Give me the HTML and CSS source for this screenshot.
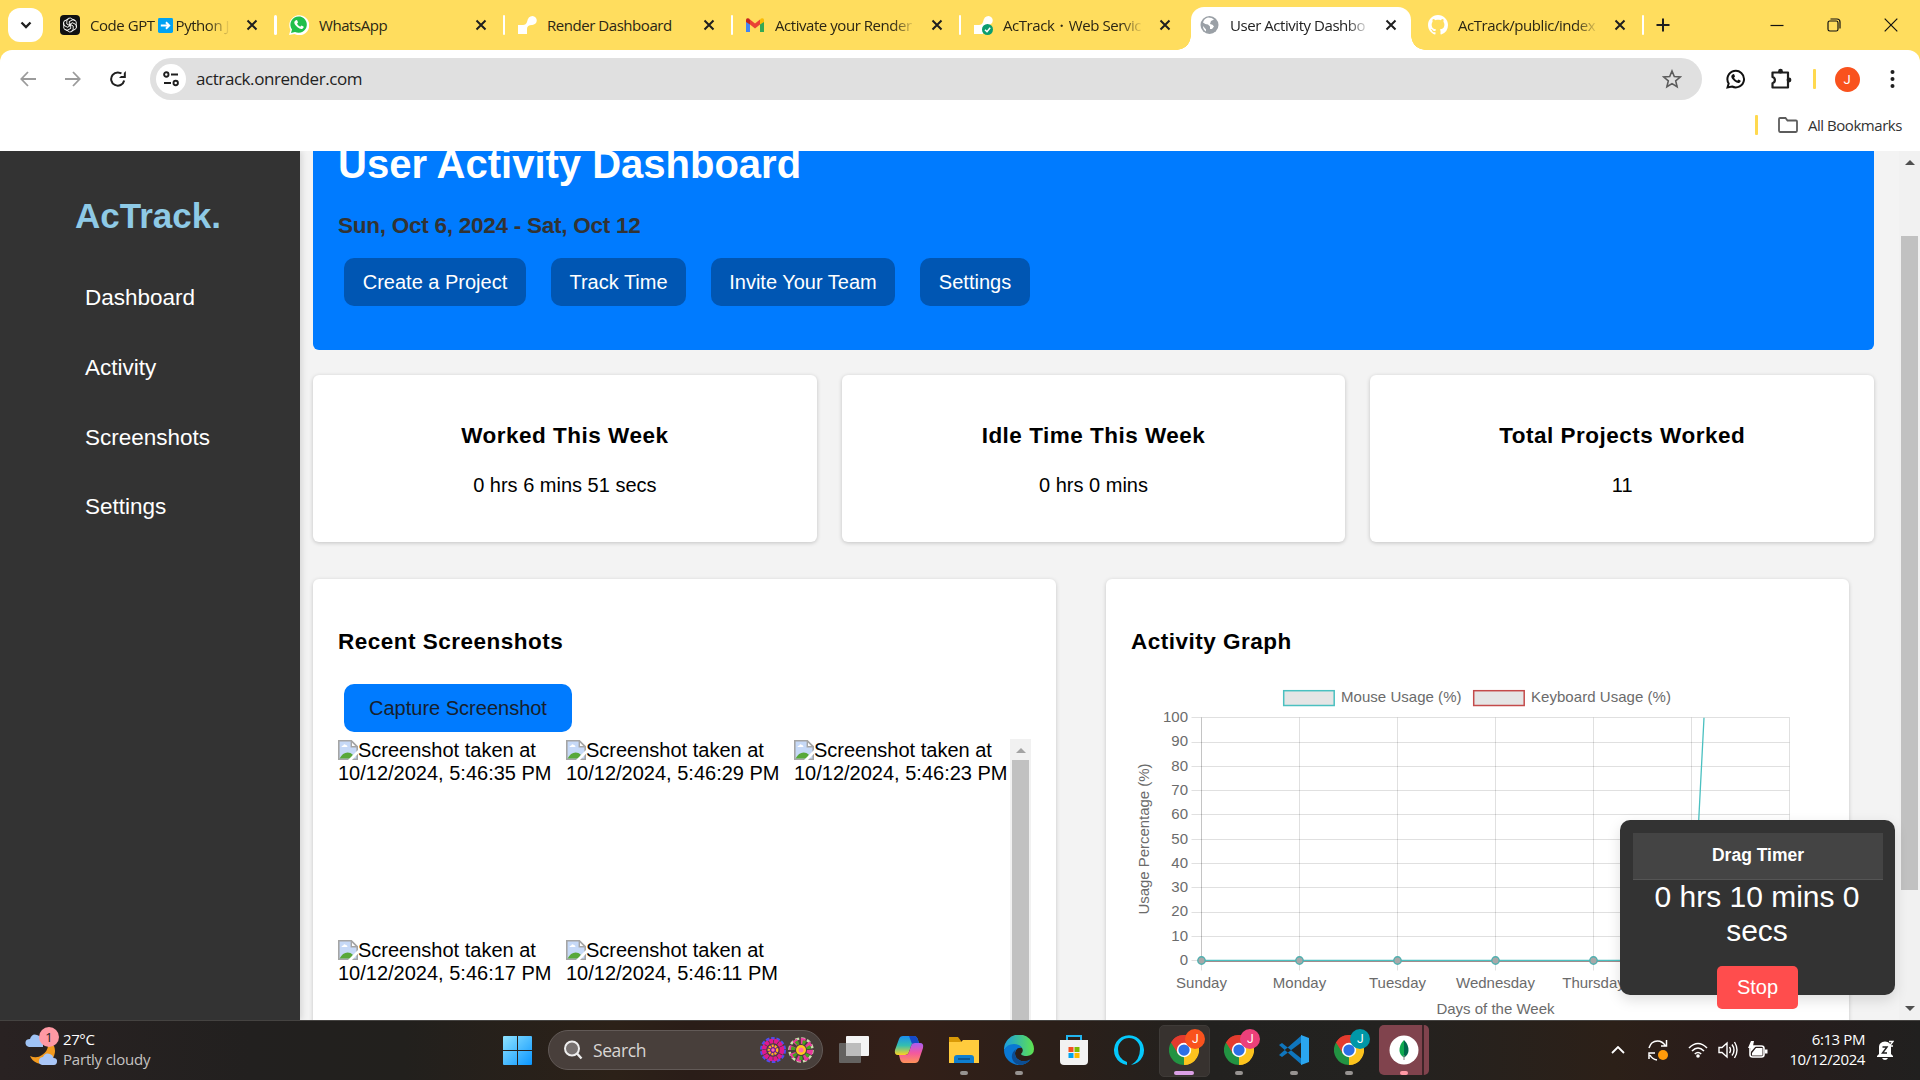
FILE: index.html
```html
<!DOCTYPE html>
<html lang="en">
<head>
<meta charset="utf-8">
<title>User Activity Dashboard</title>
<link rel="stylesheet" href="styles.css">
</head>
<body>
<svg class="defs" width="0" height="0">
  <symbol id="close" viewBox="0 0 12 12"><path d="M1.5 1.5l9 9M10.5 1.5l-9 9" stroke="#1f1f1f" stroke-width="2" fill="none"/></symbol>
  <symbol id="render" viewBox="0 0 20 20"><path d="M1 19v-9h5q3 0 4-3 1-6 5.500-6A4.500 4.500 0 0 1 15 10q-5 0-5 4v5z" fill="#fff"/></symbol>
  <symbol id="chrome" viewBox="0 0 48 48">
    <path d="M24 24L3.200 12A24 24 0 0 1 44.800 12z" fill="#e33b2e"/>
    <path d="M24 24L44.800 12A24 24 0 0 1 24 48z" fill="#fcc31e"/>
    <path d="M24 24L24 48A24 24 0 0 1 3.200 12z" fill="#229342"/>
    <path d="M24 13h20.800A24 24 0 0 0 3.200 12l11.300 18z" fill="#e33b2e"/>
    <path d="M33.500 29.500L24 48A24 24 0 0 0 44.800 13H24z" fill="#fcc31e"/>
    <circle cx="24" cy="24" r="11.500" fill="#fff"/><circle cx="24" cy="24" r="9" fill="#2c6fe5"/>
  </symbol>
  <symbol id="broken" viewBox="0 0 20 20">
    <path d="M.8.800h12.500l5.900 5.900v12.500H.8z" fill="#c6d9f7" stroke="#a5a5a5" stroke-width="1.600"/>
    <path d="M13.300 1v5.700h5.700z" fill="#fff" stroke="#a5a5a5" stroke-width="1.400"/>
    <path d="M3.500 7q0-1.500 1.800-1.500Q6 3.500 7.500 4.800 9.500 5 9.500 7z" fill="#fff"/>
    <path d="M1.600 18.400q3-6 8-6 3 0 5 2v4z" fill="#58a83a"/>
    <path d="M9.500 20.500L20.500 9.500v3.800l-7 7.200z" fill="#fff"/>
  </symbol>
</svg>

<header class="tabstrip">
  <button class="tab-search"><svg width="12" height="8" viewBox="0 0 12 8"><path d="M1.500 1.500L6 6l4.500-4.500" fill="none" stroke="#1f1f1f" stroke-width="2.300"/></svg></button>
  <nav class="tabs">
    <div class="tab first">
      <svg class="fav" viewBox="0 0 20 20"><rect width="20" height="20" rx="4" fill="#111"/><g fill="none" stroke="#fff" stroke-width=".9"><path id="petal" d="M10 10.800L6.800 9V6a3 3 0 0 1 5.200-2l3 1.700"/><use href="#petal" transform="rotate(60 10 10)"/><use href="#petal" transform="rotate(120 10 10)"/><use href="#petal" transform="rotate(180 10 10)"/><use href="#petal" transform="rotate(240 10 10)"/><use href="#petal" transform="rotate(300 10 10)"/></g></svg>
      <span class="title fade">Code GPT<svg class="arrow" viewBox="0 0 16 16"><rect width="16" height="16" rx="1.500" fill="#00a2f2"/><path d="M3 8h9M8.500 4.500L12 8l-3.500 3.500" stroke="#fff" stroke-width="2" fill="none"/></svg>Python J</span>
      <svg class="x"><use href="#close"/></svg>
    </div>
    <div class="tab">
      <svg class="fav" viewBox="0 0 20 20"><path d="M0 20l1.500-5A10 10 0 1 1 5.500 19z" fill="#fff"/><path d="M2 18l1-3.500A8.200 8.200 0 1 1 6 17z" fill="#1fbf4b"/><path d="M6.500 5.500q1.500-1 2 .5l.5 1.500-1 1.200q1 2 3.200 3l1.300-1.200 2 1q.8 1-1 2.200-2 1-5-1.500-3.500-3-3.200-5 .2-1.200 1.200-1.700z" fill="#fff"/></svg>
      <span class="title">WhatsApp</span><svg class="x"><use href="#close"/></svg>
    </div>
    <div class="tab"><svg class="fav"><use href="#render"/></svg><span class="title">Render Dashboard</span><svg class="x"><use href="#close"/></svg></div>
    <div class="tab">
      <svg class="fav" viewBox="0 0 20 20"><path d="M1 17V6l4 3v8z" fill="#4285f4"/><path d="M15 17V9l4-3v11z" fill="#34a853"/><path d="M5 4.500l5 4 5-4v5l-5 4-5-4z" fill="#ea4335"/><path d="M1 7V5q0-2.500 3-1.500l1 1v5z" fill="#c5221f"/><path d="M19 7V5q0-2.500-3-1.500l-1 1v5z" fill="#fbbc04"/></svg>
      <span class="title fade">Activate your Render</span><svg class="x"><use href="#close"/></svg>
    </div>
    <div class="tab last-before">
      <svg class="fav" viewBox="0 0 20 20"><use href="#render"/><circle cx="14.500" cy="14.500" r="5.500" fill="#0a9d70"/><path d="M12 14.700l2 2 3.200-4" fill="none" stroke="#fff" stroke-width="1.500"/></svg>
      <span class="title fade">AcTrack・Web Servic</span><svg class="x"><use href="#close"/></svg>
    </div>
    <div class="tab active">
      <svg class="fav" viewBox="0 0 20 20"><circle cx="9.500" cy="10" r="9" fill="#9aa0a6"/><path d="M8 2.500q-4 1-5 5 2 2 5 2l2 2v2.500h2l2-2.500q-1-2.500-4-2.500l1-3 3-1.500q-2-2-6-2z" fill="#fff"/><path d="M3 11l3 3.500v2q-3-2-3-5.500z" fill="#fff"/></svg>
      <span class="title fade">User Activity Dashbo</span><svg class="x"><use href="#close"/></svg>
    </div>
    <div class="tab">
      <svg class="fav" viewBox="0 0 16 16"><path fill="#fff" d="M8 0C3.580 0 0 3.580 0 8c0 3.540 2.290 6.530 5.470 7.590.4.070.55-.17.55-.38 0-.19-.01-.82-.01-1.490-2.010.37-2.530-.49-2.690-.94-.09-.23-.48-.94-.82-1.130-.28-.15-.68-.52-.01-.53.63-.01 1.080.58 1.230.82.72 1.210 1.870.87 2.330.66.070-.52.28-.87.51-1.070-1.780-.2-3.640-.89-3.640-3.950 0-.87.31-1.590.82-2.150-.08-.2-.36-1.020.08-2.120 0 0 .67-.21 2.200.82.640-.18 1.320-.27 2-.27s1.360.09 2 .27c1.530-1.040 2.200-.82 2.200-.82.44 1.100.16 1.920.08 2.120.51.56.82 1.270.82 2.150 0 3.070-1.870 3.750-3.650 3.950.29.25.54.73.54 1.480 0 1.070-.01 1.930-.01 2.200 0 .21.15.46.55.38A8 8 0 0 0 16 8c0-4.420-3.580-8-8-8z"/></svg>
      <span class="title fade">AcTrack/public/index</span><svg class="x"><use href="#close"/></svg>
    </div>
  </nav>
  <svg class="plus" width="14" height="14" viewBox="0 0 14 14"><path d="M7 .5v13M.5 7h13" stroke="#1f1f1f" stroke-width="2"/></svg>
  <div class="winctl">
    <svg width="14" height="14" viewBox="0 0 14 14"><path d="M.5 7.500h13" stroke="#111" stroke-width="1.200"/></svg>
    <svg width="14" height="14" viewBox="0 0 14 14"><g fill="none" stroke="#111" stroke-width="1.200"><rect x="1" y="3" width="10" height="10" rx="1.800"/><path d="M3.500 1h6.500q3 0 3 3v6.500"/></g></svg>
    <svg width="14" height="14" viewBox="0 0 14 14"><path d="M.7.700l12.600 12.600M13.300.7L.7 13.300" stroke="#111" stroke-width="1.200"/></svg>
  </div>
</header>

<div class="chrome-bg"><div class="toolbar">
  <div class="navbtns">
    <svg width="16" height="16" viewBox="0 0 16 16"><path d="M16 8H1.500M8 1L1.300 8 8 15" fill="none" stroke="#9b9b9b" stroke-width="1.800"/></svg>
    <svg width="16" height="16" viewBox="0 0 16 16"><path d="M0 8h14.500M8 1l6.700 7L8 15" fill="none" stroke="#9b9b9b" stroke-width="1.800"/></svg>
    <svg width="16" height="16" viewBox="0 0 16 16"><path d="M14.200 9.500A6.600 6.600 0 1 1 13 4l1.500 1.500" fill="none" stroke="#1f1f1f" stroke-width="2"/><path d="M15.800 0v7H9z" fill="#1f1f1f"/><path d="M13.800 0v5H9" fill="#fff"/></svg>
  </div>
  <div class="omnibox">
    <span class="site"><svg width="16" height="16" viewBox="0 0 16 16"><g fill="none" stroke="#1f1f1f" stroke-width="1.900"><circle cx="3.300" cy="3.500" r="2.200"/><path d="M8 3.500h7M1 12h7"/><circle cx="12.700" cy="12" r="2.200"/></g></svg></span>
    <span class="url">actrack.onrender.com</span>
    <svg class="star" width="20" height="20" viewBox="0 0 20 20"><path d="M10 2l2.300 5.500 6 .5-4.600 3.900 1.400 5.900L10 14.600l-5.100 3.200 1.400-5.900L1.700 8l6-.5z" fill="none" stroke="#5c5c5c" stroke-width="1.600"/></svg>
  </div>
  <div class="ext">
    <svg width="20" height="20" viewBox="0 0 20 20"><path d="M1.500 18.500l1.200-4A8.300 8.300 0 1 1 6 17.500z" fill="none" stroke="#111" stroke-width="2"/><path d="M6.500 5.500q1.500-1 2 .5l.5 1.500-1 1.200q1 2 3.200 3l1.300-1.200 2 1q.8 1-1 2.200-2 1-5-1.500-3.500-3-3.200-5 .2-1.200 1.200-1.700z" fill="#111"/></svg>
    <svg width="22" height="22" viewBox="0 0 22 22"><path d="M2.500 4.500H18v15H2.500v-4.300a3.200 3.200 0 0 0 0-6.200z" fill="none" stroke="#1f1f1f" stroke-width="2.200" stroke-linejoin="round"/><circle cx="10.500" cy="3.200" r="2.400" fill="#1f1f1f"/><circle cx="19" cy="12" r="2.400" fill="#1f1f1f"/></svg>
    <i class="ybar"></i>
    <span class="avatar">J</span>
    <svg width="5" height="20" viewBox="0 0 5 20"><g fill="#1f1f1f"><circle cx="2.500" cy="3" r="2"/><circle cx="2.500" cy="10" r="2"/><circle cx="2.500" cy="17" r="2"/></g></svg>
  </div>
</div>
<div class="bookmarks"><i class="ybar"></i><svg width="20" height="16" viewBox="0 0 20 16"><path d="M1 13.500V2q0-1 1-1h5.500l2 2.500H18q1 0 1 1v9q0 1.500-1 1.500H2q-1 0-1-1.500z" fill="none" stroke="#5c5c5c" stroke-width="1.800"/></svg><span>All Bookmarks</span></div></div>

<div class="page">
  <aside class="sidebar">
    <div class="logo">AcTrack.</div>
    <a>Dashboard</a><a>Activity</a><a>Screenshots</a><a>Settings</a>
  </aside>
  <main>
    <section class="hero">
      <h1>User Activity Dashboard</h1>
      <h3>Sun, Oct 6, 2024 - Sat, Oct 12</h3>
      <div class="actions"><button class="b1">Create a Project</button><button class="b2">Track Time</button><button class="b3">Invite Your Team</button><button class="b4">Settings</button></div>
    </section>
    <section class="cards">
      <div class="card"><h3>Worked This Week</h3><p>0 hrs 6 mins 51 secs</p></div>
      <div class="card"><h3>Idle Time This Week</h3><p>0 hrs 0 mins</p></div>
      <div class="card"><h3>Total Projects Worked</h3><p>11</p></div>
    </section>
    <section class="panels">
      <div class="panel">
        <h3>Recent Screenshots</h3>
        <button class="capture">Capture Screenshot</button>
        <div class="shots">
          <div class="grid">
            <div><svg><use href="#broken"/></svg>Screenshot taken at<br>10/12/2024, 5:46:35 PM</div>
            <div><svg><use href="#broken"/></svg>Screenshot taken at<br>10/12/2024, 5:46:29 PM</div>
            <div><svg><use href="#broken"/></svg>Screenshot taken at<br>10/12/2024, 5:46:23 PM</div>
            <div><svg><use href="#broken"/></svg>Screenshot taken at<br>10/12/2024, 5:46:17 PM</div>
            <div><svg><use href="#broken"/></svg>Screenshot taken at<br>10/12/2024, 5:46:11 PM</div>
          </div>
          <div class="innerbar"><svg width="10" height="5" viewBox="0 0 10 5"><path d="M0 5l5-5 5 5z" fill="#a3a3a3"/></svg><i></i></div>
        </div>
      </div>
      <div class="panel">
        <h3>Activity Graph</h3>
        <svg class="chart" width="693" height="340" viewBox="1131 680 693 340">
          <g fill="#e5e5e5" stroke-width="1.500"><rect x="1283.700" y="690.700" width="50.500" height="14.800" stroke="#4bc0c0"/><rect x="1473.700" y="690.700" width="50.500" height="14.800" stroke="#c44b4b"/></g>
          <text x="1341" y="702" textLength="120.500">Mouse Usage (%)</text><text x="1531" y="702" textLength="140">Keyboard Usage (%)</text>
          <path d="M1191.500 717.500h598M1191.500 742.500h598M1191.500 766.500h598M1191.500 790.500h598M1191.500 814.500h598M1191.500 839.500h598M1191.500 863.500h598M1191.500 887.500h598M1191.500 912.500h598M1191.500 936.500h598M1191.500 960.500h598M1299.500 717.500v253M1397.500 717.500v253M1495.500 717.500v253M1593.500 717.500v253M1691.500 717.500v253M1789.500 717.500v253M1201.500 717.500v253" stroke="#000" stroke-opacity=".12" fill="none"/>
          <path d="M1201.500 717.500v243" stroke="#000" stroke-opacity=".12"/>
          <g text-anchor="end"><text x="1188" y="722">100</text><text x="1188" y="746">90</text><text x="1188" y="771">80</text><text x="1188" y="795">70</text><text x="1188" y="819">60</text><text x="1188" y="844">50</text><text x="1188" y="868">40</text><text x="1188" y="892">30</text><text x="1188" y="916">20</text><text x="1188" y="941">10</text><text x="1188" y="965">0</text></g>
          <g text-anchor="middle"><text x="1201.500" y="988">Sunday</text><text x="1299.500" y="988">Monday</text><text x="1397.500" y="988">Tuesday</text><text x="1495.500" y="988">Wednesday</text><text x="1593.500" y="988">Thursday</text><text x="1495.500" y="1014">Days of the Week</text><text transform="translate(1149 839) rotate(-90)" textLength="151">Usage Percentage (%)</text></g>
          <path d="M1201.500 961H1691.500" stroke="#a08c8c" stroke-width="2" fill="none"/>
          <path d="M1201.500 960.300H1691.500L1704 717.700" stroke="#4bc0c0" stroke-width="1.300" fill="none"/>
          <g fill="#a8a8a8" stroke="#4fb0b0" stroke-width="1.400"><circle cx="1201.500" cy="960.500" r="3.700"/><circle cx="1299.500" cy="960.500" r="3.700"/><circle cx="1397.500" cy="960.500" r="3.700"/><circle cx="1495.500" cy="960.500" r="3.700"/><circle cx="1593.500" cy="960.500" r="3.700"/></g>
        </svg>
      </div>
    </section>
  </main>
  <div class="scrollbar"><svg width="10" height="5" viewBox="0 0 10 5"><path d="M0 5l5-5 5 5z" fill="#505050"/></svg><i></i><svg width="10" height="5" viewBox="0 0 10 5"><path d="M0 0l5 5 5-5z" fill="#505050"/></svg></div>
  <div class="timer"><div class="drag">Drag Timer</div><div class="time">0 hrs 10 mins 0 secs</div><button>Stop</button></div>
</div>

<footer class="taskbar">
  <div class="weather">
    <svg width="34" height="44" viewBox="0 0 34 44"><path d="M29 19A12 12 0 0 1 5 29q7 3 12-1 6-4 6-10z" fill="#f39a1e"/><path d="M4 20q-4-1-3.500-5Q1 12 5 12q2-6 7-4 4 1 4 5h2v7z" fill="#9fc3f5"/><path d="M17 38q-4-1-3-5 1-3 4-3 2-5 7-3 3 1 3.500 4 4 0 3.500 4-.5 3-3 3z" fill="#a9c6f7"/></svg>
    <span class="count">1</span>
    <div><b>27°C</b><span>Partly cloudy</span></div>
  </div>
  <div class="start"><svg width="29" height="29" viewBox="0 0 29 29"><defs><linearGradient id="w" x2="1" y2="1"><stop stop-color="#8fe3ff"/><stop offset="1" stop-color="#0a96ff"/></linearGradient></defs><path d="M1 0h13v14H0V1q0-1 1-1zM15 0h13q1 0 1 1v13H15zM0 15h14v14H1q-1 0-1-1zM15 15h14v13q0 1-1 1H15z" fill="url(#w)"/></svg></div>
  <div class="search">
    <svg width="20" height="20" viewBox="0 0 20 20"><circle cx="9" cy="8.500" r="7" fill="#777170" stroke="#eee" stroke-width="2"/><path d="M14 13.500l4.500 5" stroke="#eee" stroke-width="2.400"/></svg>
    <span>Search</span>
    <svg width="56" height="28" viewBox="0 0 56 28">
      <circle cx="14" cy="14" r="11.500" fill="none" stroke="#4d4ff0" stroke-width="3" stroke-dasharray="3.500 1.700"/><circle cx="14" cy="14" r="9" fill="none" stroke="#e0198e" stroke-width="4.500" stroke-dasharray="4 .8"/><circle cx="14" cy="14" r="5.500" fill="#6b1d8e"/><circle cx="14" cy="14" r="4.200" fill="none" stroke="#ffb31a" stroke-width="2.400" stroke-dasharray="2 1"/><circle cx="14" cy="14" r="1.700" fill="#ff64b4"/>
      <circle cx="42" cy="14" r="11.500" fill="none" stroke="#c9dfae" stroke-width="2.500" stroke-dasharray="4 2"/><circle cx="42" cy="14" r="9" fill="none" stroke="#e8389c" stroke-width="6" stroke-dasharray="4 3"/><circle cx="42" cy="14" r="8" fill="none" stroke="#46a51e" stroke-width="4" stroke-dasharray="3 4" stroke-dashoffset="3"/><circle cx="42" cy="14" r="5" fill="#ffc71f"/><circle cx="42" cy="14" r="2.500" fill="#ff69a6"/>
    </svg>
  </div>
  <div class="apps">
    <div class="app"><svg viewBox="0 0 30 30"><rect y="8" width="22" height="20" rx="1" fill="#646260"/><rect x="7" y="1" width="23" height="20" rx="1" fill="#f4f4f4"/><path d="M7 8h15v13H7z" fill="#bcbcbc"/></svg></div>
    <div class="app"><svg viewBox="0 0 30 30"><defs><linearGradient id="c1" x2="0" y2="1"><stop stop-color="#1a8ef0"/><stop offset=".5" stop-color="#34bfae"/><stop offset="1" stop-color="#ffd21f"/></linearGradient><linearGradient id="c2" x2="0" y2="1"><stop stop-color="#a65df5"/><stop offset=".5" stop-color="#f3589e"/><stop offset="1" stop-color="#ff9258"/></linearGradient></defs><path d="M9 1h11q3 0 4 4l1 3h-4q-3 0-4 3l-2 6q-1 3-4 3H4q-4 0-3-5L5 4q1-3 4-3z" fill="url(#c1)"/><path d="M15 1h5q3 0 4 4l1 3h-4q-2 0-3 1z" fill="#1549c8"/><path d="M21 28H10q-3 0-4-4l-1-4h6q3 0 4-3l2-6q1-3 4-3h5q4 0 3 5l-4 12q-1 3-4 3z" fill="url(#c2)"/></svg></div>
    <div class="app run"><svg viewBox="0 0 30 30"><path d="M0 2h9l3 4v6H0z" fill="#d99a07"/><path d="M0 7h12l2-2h16v23H0z" fill="#ffcb3d"/><path d="M5 28v-5q0-3 3-3h14q3 0 3 3v5z" fill="#0f7fd0"/><path d="M9 24h12" stroke="#0a4a80" stroke-width="1.500"/></svg></div>
    <div class="app run"><svg viewBox="0 0 30 30"><defs><linearGradient id="e" x2="1"><stop stop-color="#1b9de2"/><stop offset="1" stop-color="#5fe34e"/></linearGradient></defs><path d="M0 15A15 15 0 0 1 30 14q0 6-7 7-5 0-6-2 3-3 1-6-2-3-7-3-6 0-11 5z" fill="url(#e)"/><path d="M0 15Q3 9 10 9q6 0 8 4-6-1-7 5 0 6 6 8 5 1 9-1-4 5-11 5A15 15 0 0 1 0 15z" fill="#0a78d4"/><path d="M11 18q0 6 6 8 5 1 10-2-5 6-12 6-6-2-7-7-1-5 4-9-1 1-1 4z" fill="#0c4d93"/></svg></div>
    <div class="app"><svg viewBox="0 0 30 30"><path d="M8 6V1h14v5" fill="none" stroke="#22b5ee" stroke-width="2"/><path d="M1 5h28v21q0 4-4 4H5q-4 0-4-4z" fill="#f2f2f2"/><path d="M9.500 12h5v5h-5z" fill="#f25022"/><path d="M15.500 12h5v5h-5z" fill="#7fba00"/><path d="M9.500 18h5v5h-5z" fill="#00a4ef"/><path d="M15.500 18h5v5h-5z" fill="#ffb900"/></svg></div>
    <div class="app"><svg viewBox="0 0 30 30"><path d="M13 30A15 15 0 1 1 17 30Q26 25 26 14A11 11 0 0 0 4 14Q4 24 13 27z" fill="#05c8fb"/></svg></div>
    <div class="app on"><svg><use href="#chrome"/></svg><b class="o">J</b></div>
    <div class="app run"><svg><use href="#chrome"/></svg><b class="p">J</b></div>
    <div class="app run"><svg viewBox="0 0 30 30"><path d="M0 10l3-2 20 16v6zM0 20l3 2L23 7V0z" fill="#0f76be"/><path d="M22 0l8 3v24l-8 3z" fill="#2aa6f0"/></svg></div>
    <div class="app run"><svg><use href="#chrome"/></svg><b class="t">J</b></div>
    <div class="app mongo run"><svg viewBox="0 0 30 30"><ellipse cx="15" cy="15" rx="14.500" ry="14.500" fill="#fff"/><path d="M15 5q-5 5-4.500 11 .5 4 4.500 6.500z" fill="#10aa50"/><path d="M15 5q5 5 4.500 11-.5 4-4.500 6.500z" fill="#00684a"/><path d="M15 20v5" stroke="#888" stroke-width="1"/></svg></div>
  </div>
  <div class="tray">
    <svg width="14" height="8" viewBox="0 0 14 8"><path d="M1 7l6-6 6 6" fill="none" stroke="#fff" stroke-width="1.800"/></svg>
    <svg class="sync" width="20" height="22" viewBox="0 0 20 22"><path d="M1 9Q3 2 9.500 2q5 0 8 5M18.500 1v6H13M1 20v-6h6M2 16q2 4 7 5" fill="none" stroke="#fff" stroke-width="1.500"/><circle cx="15" cy="16" r="5" fill="#ff9b0a"/></svg>
    <svg width="20" height="16" viewBox="0 0 20 16"><g fill="none" stroke="#fff" stroke-width="1.600"><path d="M1 6q9-9 18 0M4 9q6-6 12 0M6.800 12q3.200-3 6.400 0"/></g><circle cx="10" cy="14" r="1.800" fill="#fff"/></svg>
    <svg width="20" height="18" viewBox="0 0 20 18"><g fill="none" stroke="#fff" stroke-width="1.400"><path d="M1 6.500h3l5-4.500v14l-5-4.500H1zM11.500 6q2 3 0 6M14 3.500q4 5.500 0 11M16.500 1q5 8 0 16"/></g></svg>
    <svg width="20" height="18" viewBox="0 0 20 18"><rect x="2" y="5" width="14" height="11" rx="2.500" fill="none" stroke="#fff" stroke-width="1.600"/><path d="M8 7h6.500v7.500H4V12zM17 8.500h2.500v4H17zM3 0L0 7h3l-1 5 6-7H5l1-5z" fill="#fff"/></svg>
    <div class="clock"><span>6:13 PM</span><span>10/12/2024</span></div>
    <svg width="17" height="20" viewBox="0 0 17 20"><path d="M2 14V7q0-5 6-5.500 6 .5 6 5.500v7l2 2v1H0v-1zM5 18h6q-1 2-3 2t-3-2z" fill="#fff"/><path d="M5.500 7h4.500l-4.500 6H10" stroke="#222" stroke-width="1.500" fill="none"/><path d="M12 1.500h4L12.500 6H16" stroke="#fff" stroke-width="1.300" fill="none"/></svg>
  </div>
</footer>
</body>
</html>
```
FILE: styles.css
```css
* { box-sizing: border-box; }
body { margin: 0; width: 1920px; height: 1080px; overflow: hidden; display: flex; flex-direction: column; font-family: "Liberation Sans", Arial, sans-serif; font-size: 20px; background: #fff; }
svg { display: block; flex: none; }
.defs { position: absolute; }
button { border: 0; padding: 0; margin: 0; font: inherit; display: block; }
h1, h3, p { margin: 0; }

/* browser window */
.tabstrip { height: 50px; flex: none; background: #ffdd5e; display: flex; align-items: center; padding-left: 8px; font: 15px "Open Sans", "Noto Sans", sans-serif; color: #2b2614; }
.tab-search { width: 35px; height: 34px; border-radius: 12px; background: #fff; display: flex; align-items: center; justify-content: center; margin-right: 5px; }
.tabs { display: flex; height: 50px; }
.tab { width: 228px; flex: none; display: flex; align-items: center; padding-left: 12px; position: relative; }
.tab::after { content: ""; width: 3px; height: 20px; background: #fff; border-radius: 2px; margin-left: 16px; }
.tab.first { width: 229px; }
.tab.last-before { width: 227px; }
.tab.last-before::after { visibility: hidden; }
.fav { width: 20px; height: 20px; margin-right: 10px; }
.title { width: 142px; flex: none; white-space: nowrap; letter-spacing: -.45px; line-height: 24px; display: flex; align-items: center; }
.fade { -webkit-mask-image: linear-gradient(90deg, #000 83%, transparent 99%); mask-image: linear-gradient(90deg, #000 83%, transparent 99%); }
.arrow { width: 15px; height: 15px; margin: 0 3px; }
.x { width: 12px; height: 12px; margin-left: 14px; }
.active { color: #222; background: #fff; width: 220px; margin: 7px 5px 0 3px; border-radius: 13px 13px 0 0; padding: 0 0 7px 9px; }
.active .title { width: 141px; }
.active::before, .active::after { content: ""; position: absolute; bottom: 0; width: 14px; height: 14px; margin: 0; border-radius: 0; background: radial-gradient(circle at 0 0, transparent 13.500px, #fff 14px); }
.active::before { left: -14px; }
.active::after { right: -14px; background: radial-gradient(circle at 100% 0, transparent 13.500px, #fff 14px); }
.plus { margin-left: 12px; }
.winctl { display: flex; gap: 43px; margin-left: auto; padding-right: 22px; }
.chrome-bg { height: 101px; flex: none; background: linear-gradient(#ffdd5e 0 14px, #fff 14px); }
.toolbar { height: 58px; background: #fff; border-radius: 12px 12px 0 0; display: flex; align-items: center; padding-left: 20px; }
.navbtns { display: flex; gap: 29px; width: 130px; }
.omnibox { width: 1552px; height: 42px; border-radius: 21px; background: #e0e0e0; display: flex; align-items: center; padding: 0 20px 0 6px; }
.site { width: 30px; height: 30px; border-radius: 50%; background: #fff; display: grid; place-items: center; }
.url { margin-left: 10px; font: 17px/24px "Open Sans", sans-serif; letter-spacing: -.43px; color: #222; }
.star { margin-left: auto; }
.ext { display: flex; align-items: center; padding-left: 24px; }
.ext svg:nth-child(2) { margin-left: 24px; }
.ext .ybar { margin: 0 20px 0 21px; }
.ybar { width: 2.500px; height: 20px; background: #ffd94f; border-radius: 1px; }
.avatar { width: 25px; height: 25px; border-radius: 50%; background: #f9521d; color: #fff; font: 13px/25px Roboto, sans-serif; text-align: center; margin: 0 30px 0 -1px; }
.bookmarks { display: flex; align-items: center; justify-content: flex-end; height: 34px; padding-right: 18px; font: 15px "Open Sans", sans-serif; letter-spacing: -.45px; color: #333; }
.bookmarks svg { margin: 0 10px 0 20px; }

/* page */
.page { height: 869px; flex: none; position: relative; display: flex; overflow: hidden; background: #f3f3f3; }
.sidebar { width: 300px; flex: none; background: #333; color: #fff; box-shadow: 2px 0 6px rgba(0,0,0,.12); padding: 46px 0 0 85px; display: flex; flex-direction: column; }
.logo { font: bold 35px/40px "Liberation Sans", sans-serif; color: #8ecae6; margin: -1px 0 40px -10px; }
.sidebar a { font-size: 22.500px; line-height: 44px; margin-bottom: 25.800px; }
main { width: 1599px; padding: 0 25px 0 13px; overflow: hidden; }
.hero { height: 199px; background: #007bff; border-radius: 0 0 6px 6px; padding: 0 25px; overflow: hidden; display: flow-root; }
.hero h1 { font-size: 40px; line-height: 40px; color: #fff; margin-top: -7px; }
.hero h3 { font-size: 22.500px; line-height: 26px; letter-spacing: -.25px; color: #333; margin: 29px 0 19px; }
.actions { display: flex; padding-left: 6px; gap: 25px; }
.actions button { height: 48px; border-radius: 10px; background: #0056b3; color: #fff; }
.b1 { width: 182px; } .b2 { width: 135px; } .b3 { width: 184px; } .b4 { width: 110px; }
.cards { display: flex; gap: 25px; margin-top: 25px; }
.card { flex: 1; height: 167px; background: #fff; border-radius: 6px; box-shadow: 0 1px 4px rgba(0,0,0,.2); padding-top: 47px; text-align: center; }
.card h3, .panel h3 { font-size: 22.500px; line-height: 28px; letter-spacing: .5px; }
.card p { line-height: 24px; margin-top: 23px; }
.panels { display: flex; gap: 50px; margin-top: 37px; }
.panel { width: 743px; height: 500px; background: #fff; border-radius: 6px; box-shadow: 0 1px 4px rgba(0,0,0,.18); padding: 49px 25px 0; }
.capture { margin: 28px 0 7px 6px; width: 228px; height: 48px; border-radius: 10px; background: #007bff; color: #17202c; }
.shots { display: flex; }
.grid { width: 672px; display: grid; grid-template-columns: repeat(3, 228px); grid-auto-rows: 200px; line-height: 23px; white-space: nowrap; }
.grid svg { width: 20px; height: 20px; display: inline-block; vertical-align: -1px; margin-bottom: -4px; position: relative; top: -2px; }
.innerbar { width: 21px; background: #f1f1f1; display: flex; flex-direction: column; align-items: center; padding-top: 9px; }
.innerbar i { width: 17px; flex: 1; background: #c1c1c1; margin-top: 7px; }
.chart { margin-top: 24px; font: 15px "Liberation Sans", sans-serif; fill: #6b6b6b; }
.scrollbar { width: 21px; background: #f1f1f1; display: flex; flex-direction: column; align-items: center; padding-top: 9px; }
.scrollbar i { width: 17px; height: 654px; background: #c1c1c1; margin: 71px 0 116px; }
.timer { position: absolute; left: 1620px; top: 669px; width: 275px; height: 175px; background: #333; border-radius: 10px; padding: 13px 12px 0 13px; color: #fff; box-shadow: 0 5px 14px rgba(0,0,0,.13); display: flex; flex-direction: column; align-items: center; }
.drag { width: 100%; height: 47px; flex: none; background: #444; border-bottom: 1px solid #555; font: bold 17.500px/44px "Liberation Sans", sans-serif; text-align: center; }
.time { font-size: 30px; line-height: 34px; text-align: center; padding: 0 16px 0 14px; }
.timer button { width: 81px; height: 43px; flex: none; margin: 18px 1px 0 0; border-radius: 5px; background: #ff4d4d; color: #fff; }

/* taskbar */
.taskbar { height: 60px; flex: none; position: relative; display: flex; background: linear-gradient(90deg, #292222, #22201f 13%, #22201d 21%, #2c2118 32%, #2a1d18 36%, #331f18 47%, #2b1f19 55%, #22211f 63%, #232220 72%, #2c2018 84%, #291c1b 90%, #21201f); border-top: 1px solid #454341; font: 15px "Open Sans", sans-serif; color: #fff; letter-spacing: -.4px; }
.weather { width: 503px; display: flex; position: relative; padding: 6px 0 0 25px; }
.weather > div { display: flex; flex-direction: column; padding: 2px 0 0 4px; line-height: 20px; }
.weather b { font-weight: 400; }
.weather div span { color: #c6c3c1; letter-spacing: -.2px; }
.count { position: absolute; left: 39px; top: 6px; width: 20px; height: 20px; border-radius: 50%; background: #ff99a4; color: #222; text-align: center; line-height: 20px; letter-spacing: 0; font-size: 13px; }
.start { width: 45px; padding-top: 15px; }
.search { width: 275px; height: 40px; margin-top: 9px; border-radius: 20px; background: #483f3b; border: 1px solid #625a57; display: flex; align-items: center; padding: 0 7px 0 14px; font-size: 17.500px; color: #d9d6d4; }
.search span { margin: 0 auto 0 10px; }
.apps { display: flex; margin-left: 3px; }
.app { width: 55px; position: relative; display: flex; justify-content: center; padding-top: 14px; }
.app svg { width: 30px; height: 30px; position: relative; }
.app b { position: absolute; left: 29px; top: 8px; width: 20px; height: 20px; border-radius: 50%; color: #fff; font: 12px/20px Roboto, sans-serif; text-align: center; }
.o { background: #f9521d; } .p { background: #ec407a; } .t { background: #0097a7; }
.run::after, .on::after { content: ""; position: absolute; bottom: 5px; width: 8px; height: 4px; border-radius: 2px; background: #979391; }
.on::after { width: 20px; background: #dba0e6; }
.on::before { content: ""; position: absolute; left: 3px; top: 4px; width: 49px; height: 50px; border-radius: 5px; background: #37322f; border: 1px solid #3f3b38; }
.mongo::before { content: ""; position: absolute; left: 3px; top: 4px; width: 50px; height: 50px; border-radius: 5px; background: linear-gradient(90deg, #80434d 43px, #3e2528 43px 45px, #80434d 45px); }
.mongo::after { background: #ff99a4; }
.tray { display: flex; align-items: center; margin-left: auto; padding: 0 26px 2px 0; }
.sync { margin: 0 20px 0 23px; }
.tray svg:nth-child(n+4) { margin-left: 10px; }
.clock { display: flex; flex-direction: column; text-align: right; width: 97px; line-height: 19.500px; }
.clock + svg { margin-left: 12px !important; }
```
